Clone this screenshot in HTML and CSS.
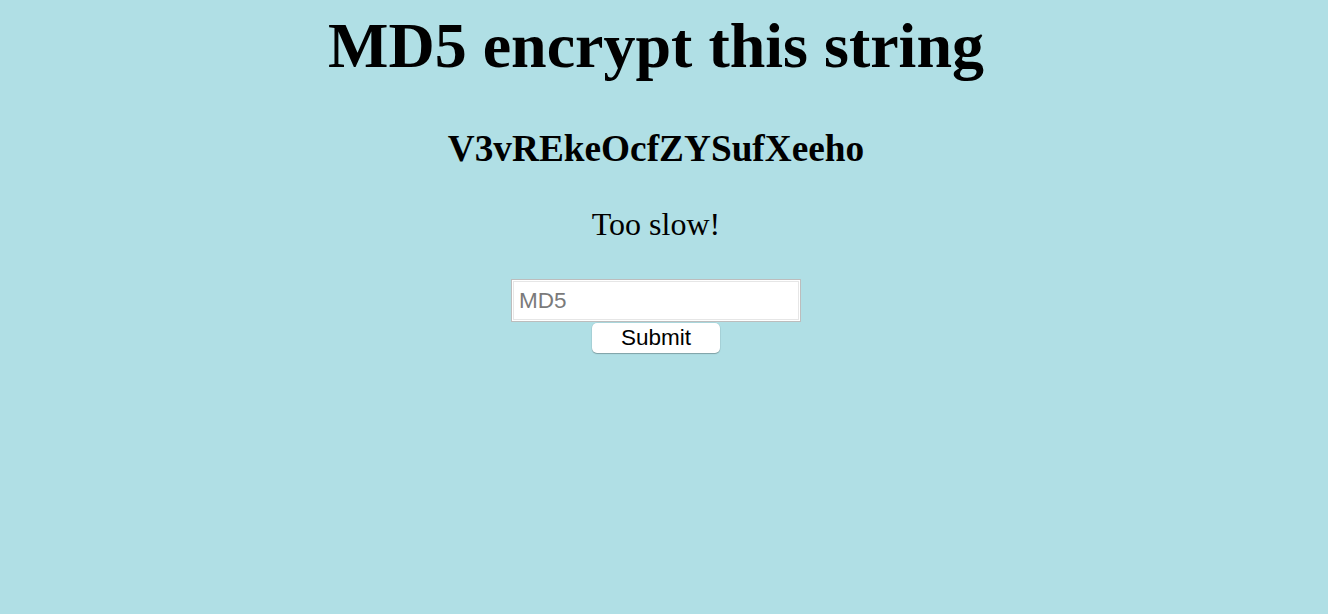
FILE: index.html
```html
<!DOCTYPE html>
<html>
<head>
<meta charset="utf-8">
<link rel="stylesheet" href="styles.css">
</head>
<body>
<div class="page">
  <h1 class="title">MD5 encrypt this string</h1>
  <h2 class="target">V3vREkeOcfZYSufXeeho</h2>
  <p class="status">Too slow!</p>
  <form class="form">
    <input class="field" type="text" placeholder="MD5">
    <button class="submit" type="button">Submit</button>
  </form>
</div>
</body>
</html>
```
FILE: styles.css
```css
html, body {
  margin: 0;
  padding: 0;
  background: #b0dfe5;
  height: 100%;
}
.page {
  display: flex;
  flex-direction: column;
  align-items: center;
  font-family: "Liberation Serif", "Times New Roman", serif;
  color: #000;
  padding: 9px 16px 0 0;
}
.title {
  font-size: 64px;
  font-weight: bold;
  margin: 0;
  line-height: normal;
}
.target {
  font-size: 37.3px;
  font-weight: bold;
  margin: 44px 0 0;
  line-height: normal;
}
.status {
  font-size: 32px;
  margin: 36px 0 0;
  line-height: normal;
}
.form {
  display: flex;
  flex-direction: column;
  align-items: center;
  margin-top: 36px;
  gap: 1px;
}
.field {
  box-sizing: border-box;
  width: 290px;
  height: 43px;
  border: 1px solid #bdbdbd;
  box-shadow: inset 0 0 0 1px #ffffff, inset 0 0 0 2px #e6e6e6;
  background: #fff;
  padding: 0 7px;
  font-family: "Liberation Sans", Arial, sans-serif;
  font-size: 22.5px;
  color: #000;
  outline: none;
}
.field::placeholder {
  color: #7a7a7a;
}
.submit {
  box-sizing: border-box;
  width: 128px;
  height: 30px;
  background: #fff;
  border: none;
  border-radius: 5px;
  box-shadow: 0 1px 1px rgba(0,0,0,0.25), 0 0 0 0.5px rgba(0,0,0,0.08);
  font-family: "Liberation Sans", Arial, sans-serif;
  font-size: 22.5px;
  color: #000;
  padding: 0;
}
```
